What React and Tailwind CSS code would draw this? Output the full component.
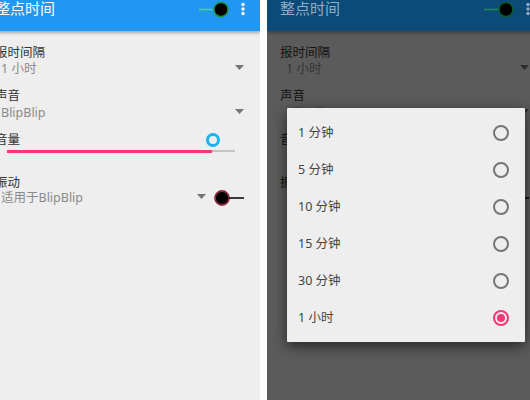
const font = { fontFamily: '"Noto Sans", "Noto Sans CJK SC", sans-serif' };

function Arrow() {
  return <svg width="9" height="5" viewBox="0 0 9 5" className="mb-[3px] shrink-0"><path d="M0 0H9L4.5 5Z" fill="#757575" /></svg>;
}

function Row({ label, value, tall }) {
  return (
    <div className="flex flex-col">
      <div className="text-[12.5px] leading-[16px] text-[#333333]">{label}</div>
      <div className={`flex items-center justify-between pl-[6px] pr-[16px] ${tall ? "h-[17px]" : "h-[16px]"}`}>
        <span className={`text-[12.5px] leading-[16px] text-[#8a8a8a] ${tall ? "pt-[1px]" : ""}`}>{value}</span>
        <Arrow />
      </div>
    </div>
  );
}

function Phone({ dim }) {
  return (
    <div className="relative h-[400px] w-[278px] shrink-0 overflow-hidden bg-[#eeeeee]" style={font}>
      <div className={`relative z-10 flex h-[31px] items-start justify-between pl-[13px] shadow-[0_2px_3px_rgba(0,0,0,0.3)] ${dim ? "bg-[#0c4a78]" : "bg-[#2196f3]"}`}>
        <span className={`-mt-[2px] text-[15px] leading-[20px] ${dim ? "text-[#93aec4]" : "text-white"}`}>整点时间</span>
        <div className="flex items-start pr-[15px]">
          <svg width="34" height="19" viewBox="0 0 34 19" className="mr-[8px]">
            <line x1="0" y1="9.5" x2="15" y2="9.5" stroke={dim ? "#1f8a4e" : "#4cd964"} strokeWidth="1.5" />
            <circle cx="22" cy="9.5" r="7" fill="#000" stroke={dim ? "#0e5a2a" : "#1f8f3a"} strokeWidth="1.5" />
          </svg>
          <svg width="4" height="14" viewBox="0 0 4 14" className="mt-[2px]">
            <circle cx="2" cy="2.5" r="1.7" fill={dim ? "#93aec4" : "#fff"} />
            <circle cx="2" cy="7" r="1.7" fill={dim ? "#93aec4" : "#fff"} />
            <circle cx="2" cy="11.5" r="1.7" fill={dim ? "#93aec4" : "#fff"} />
          </svg>
        </div>
      </div>
      <div className="flex flex-col pl-[13px] pt-[14px]">
        <Row label="报时间隔" value="1 小时" />
        <div className="mt-[11px]"><Row label="声音" value="BlipBlip" tall /></div>
        <div className="relative mt-[11px] h-[28px]">
          <div className="text-[12.5px] leading-[16px] text-[#333333]">音量</div>
          <div className="mt-[2px] ml-[12px] flex h-[2px] w-[228px] bg-[#c4c4c4]">
            <div className="h-[3px] w-[205px] bg-[#f1387b]" />
          </div>
          <div className="absolute left-[211px] top-[1px] h-[14px] w-[14px] rounded-full border-[3px] border-[#16b5ee]" />
        </div>
        <div className="mt-[15px] flex flex-col">
          <div className="text-[12.5px] leading-[15px] text-[#333333]">振动</div>
          <div className="flex h-[16px] items-center justify-between pl-[6px] pr-[16px]">
            <span className="text-[12.5px] leading-[16px] text-[#8a8a8a]">适用于BlipBlip</span>
            <div className="flex items-center gap-[7px]">
              <Arrow />
              <svg width="31" height="18" viewBox="0 0 31 18">
                <circle cx="9" cy="9" r="7" fill="#000" stroke="#8d2c3c" strokeWidth="1.8" />
                <line x1="16" y1="9" x2="31" y2="9" stroke="#000" strokeWidth="1.5" />
              </svg>
            </div>
          </div>
        </div>
      </div>
      {dim && <div className="absolute inset-0 bg-black/[0.62]" />}
      {dim && <Dialog />}
    </div>
  );
}

const options = ["1 分钟", "5 分钟", "10 分钟", "15 分钟", "30 分钟", "1 小时"];

function Dialog() {
  return (
    <div className="absolute left-[20px] top-[108px] z-20 flex h-[234px] w-[238px] flex-col rounded-[1px] bg-[#eeeeee] py-[6px] shadow-[0_4px_14px_rgba(0,0,0,0.6)]">
      {options.map((o, i) => (
        <div key={o} className="flex h-[37px] items-center justify-between pl-[11px] pr-[16px]">
          <span className="pt-[2px] text-[12.5px] text-[#444444]">{o}</span>
          {i === 5 ? (
            <span className="flex h-[16px] w-[16px] items-center justify-center rounded-full border-2 border-[#f5387a]">
              <span className="h-[8px] w-[8px] rounded-full bg-[#f5387a]" />
            </span>
          ) : (
            <span className="h-[16px] w-[16px] rounded-full border-2 border-[#757575]" />
          )}
        </div>
      ))}
    </div>
  );
}

export default function App() {
  return (
    <div className="flex h-[400px] w-[530px] overflow-hidden bg-white">
      <div className="h-[400px] w-[260px] shrink-0 overflow-hidden">
        <div className="-ml-[18px]"><Phone /></div>
      </div>
      <div className="ml-[7px] h-[400px] w-[263px] shrink-0 overflow-hidden">
        <Phone dim />
      </div>
    </div>
  );
}
